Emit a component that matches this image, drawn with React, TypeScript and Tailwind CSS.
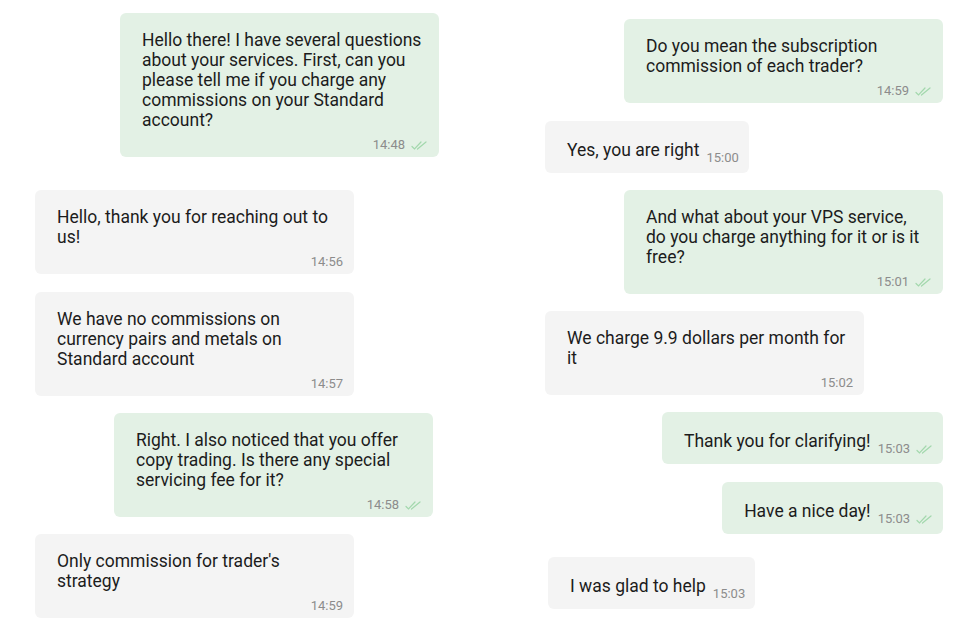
import React from 'react';

type Msg = {
  text: string;
  time: string;
  mine?: boolean;
  inline?: boolean;
  cls?: string;
};

const leftCol: Msg[] = [
  {
    text: 'Hello there! I have several questions about your services. First, can you please tell me if you charge any commissions on your Standard account?',
    time: '14:48',
    mine: true,
    cls: 'self-end',
  },
  { text: 'Hello, thank you for reaching out to us!', time: '14:56', cls: 'mt-[33px]' },
  { text: 'We have no commissions on currency pairs and metals on Standard account', time: '14:57', cls: 'mt-[18px]' },
  {
    text: 'Right. I also noticed that you offer copy trading. Is there any special servicing fee for it?',
    time: '14:58',
    mine: true,
    cls: 'mt-[17px] self-end mr-[6px]',
  },
  { text: "Only commission for trader's strategy", time: '14:59', cls: 'mt-[17px]' },
];

const rightCol: Msg[] = [
  { text: 'Do you mean the subscription commission of each trader?', time: '14:59', mine: true, cls: 'self-end' },
  { text: 'Yes, you are right', time: '15:00', inline: true, cls: 'mt-[18px]' },
  {
    text: 'And what about your VPS service, do you charge anything for it or is it free?',
    time: '15:01',
    mine: true,
    cls: 'mt-[17px] self-end',
  },
  { text: 'We charge 9.9 dollars per month for it', time: '15:02', cls: 'mt-[17px]' },
  { text: 'Thank you for clarifying!', time: '15:03', mine: true, inline: true, cls: 'mt-[17px] self-end' },
  { text: 'Have a nice day!', time: '15:03', mine: true, inline: true, cls: 'mt-[18px] self-end' },
  { text: 'I was glad to help', time: '15:03', inline: true, cls: 'mt-[23px] ml-[3px]' },
];

function Ticks() {
  return (
    <svg width="17" height="10" viewBox="0 0 17 10" fill="none" stroke="#a3d8ad" strokeWidth="1.2" strokeLinecap="round">
      <path d="M1 6.5 L3.5 9 L10 2" />
      <path d="M6.5 9 L15 2" />
    </svg>
  );
}

function Bubble({ m }: { m: Msg }) {
  const bg = m.mine ? 'bg-[#e3f1e5]' : 'bg-[#f4f4f4]';
  if (m.inline) {
    return (
      <div className={`${bg} ${m.cls ?? ''} rounded-md pl-[22px] pr-[10px] pt-[19px] pb-[13px] flex items-end`}>
        <span className="text-[17.5px] leading-[20px] text-[#1c1c1c]">{m.text}</span>
        <span className="ml-[7px] mb-[-6px] flex items-center gap-[6px] text-[13px] leading-[16px] text-[#8c8c8c]">
          {m.time}
          {m.mine && <Ticks />}
        </span>
      </div>
    );
  }
  return (
    <div className={`${bg} ${m.cls ?? ''} w-[319px] rounded-md pl-[22px] pr-[15px] pt-[17px] pb-[4px]`}>
      <p className="text-[17.5px] leading-[20px] text-[#1c1c1c]">{m.text}</p>
      <div className="mt-[7px] mr-[-4px] flex items-center justify-end gap-[6px] text-[13px] leading-[16px] text-[#8c8c8c]">
        {m.time}
        {m.mine && <Ticks />}
      </div>
    </div>
  );
}

export default function App() {
  return (
    <div className="w-[975px] h-[642px] bg-white flex pl-[35px] font-['Roboto',sans-serif] overflow-hidden">
      <div className="w-[404px] flex flex-col items-start pt-[13px]">
        {leftCol.map((m, i) => (
          <Bubble key={i} m={m} />
        ))}
      </div>
      <div className="ml-[106px] w-[398px] flex flex-col items-start pt-[19px]">
        {rightCol.map((m, i) => (
          <Bubble key={i} m={m} />
        ))}
      </div>
    </div>
  );
}
